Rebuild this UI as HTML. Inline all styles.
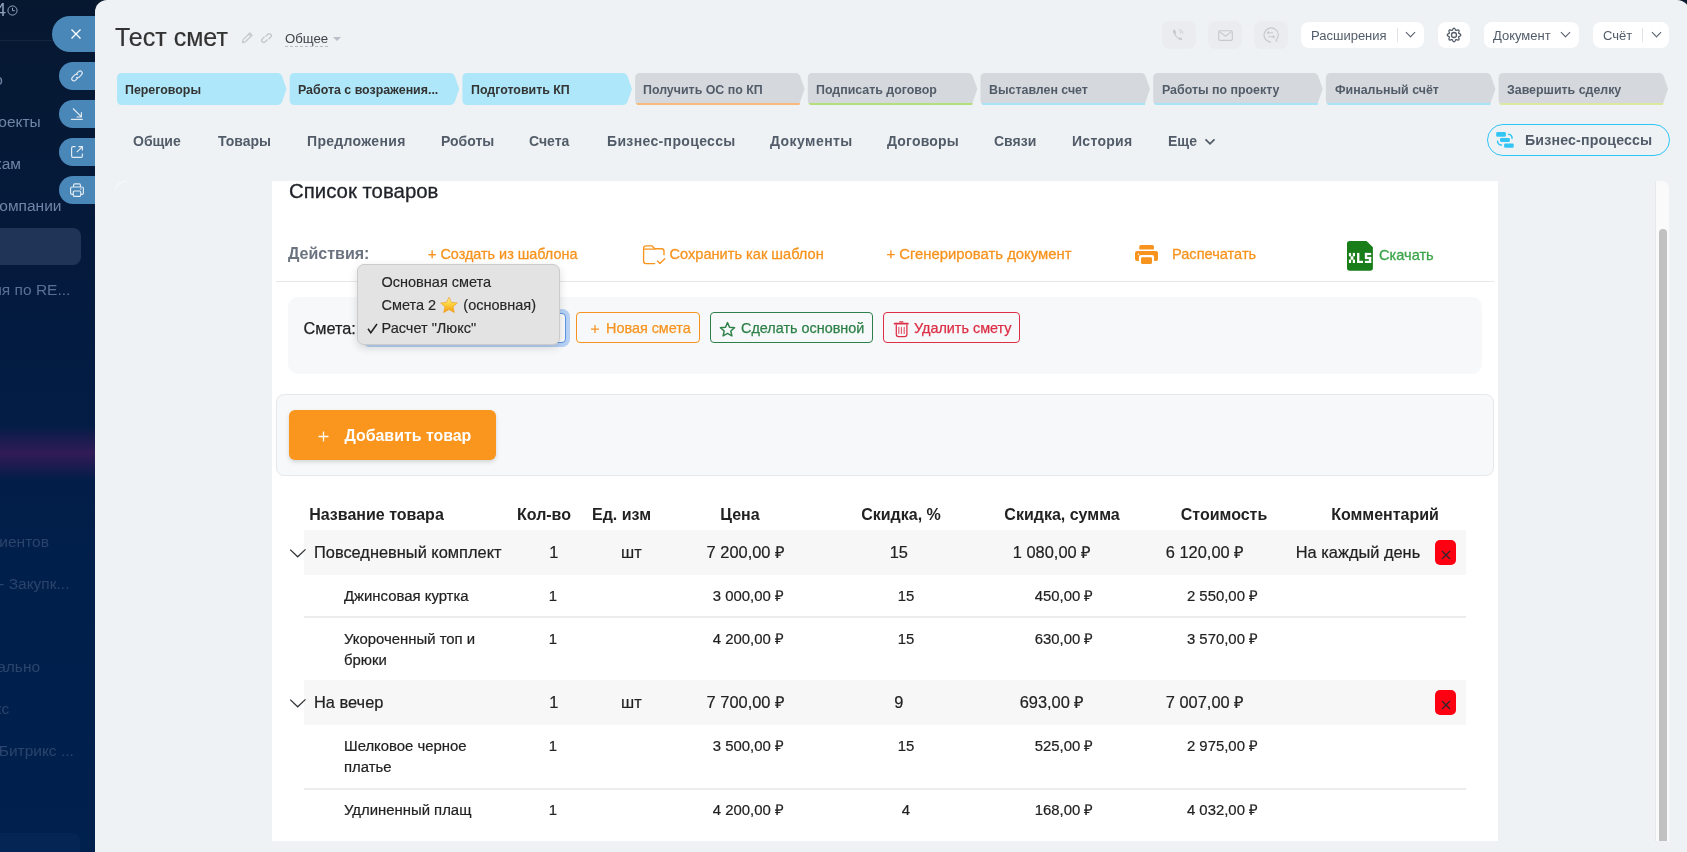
<!DOCTYPE html>
<html><head><meta charset="utf-8">
<style>
*{box-sizing:border-box;margin:0;padding:0}
html,body{width:1687px;height:852px;overflow:hidden}
#wrap{position:absolute;left:0;top:0;width:1687px;height:852px;will-change:transform}
body{font-family:"Liberation Sans",sans-serif;background:#0b1a2e;position:relative}
.abs{position:absolute}
.nw{white-space:nowrap}
/* sidebar */
#sb{position:absolute;left:0;top:0;width:95px;height:852px;background:linear-gradient(180deg,#061830 0%,#05193a 25%,#031c43 45%,#011f4b 65%,#00204d 100%);overflow:hidden}
.sbt{position:absolute;font-size:15.5px;color:#6f86a8;white-space:nowrap;line-height:18px}
.sbd{color:#2b446d}
#glow{position:absolute;left:0;top:425px;width:95px;height:55px;background:linear-gradient(180deg,rgba(60,25,90,0) 0%,rgba(52,26,88,.55) 30%,rgba(58,27,90,.85) 52%,rgba(52,26,88,.55) 72%,rgba(60,25,90,0) 100%)}
/* side buttons */
.sbtn{position:absolute;left:59px;width:40px;height:28px;border-radius:14px 0 0 14px;background:#4a87b9}
/* slider */
#sl{position:absolute;left:95px;top:0;width:1595px;height:852px;background:#eef2f4;border-top-left-radius:12px;border-top-right-radius:13px}

.tb{position:absolute;top:22px;height:26px;background:#fff;border-radius:8px;font-size:13px;color:#525c69;line-height:28px;white-space:nowrap}
.tbi{position:absolute;top:21px;width:34px;height:28px;background:#e8eaed;border-radius:8px;opacity:.75}
.chev{position:absolute;width:7px;height:7px;border-right:1.3px solid #525c69;border-bottom:1.3px solid #525c69;transform:rotate(45deg)}
.sep{position:absolute;top:6px;width:1px;height:14px;background:#dfe2e6}
.st{position:absolute;top:74px;height:32px;font-size:12.4px;font-weight:700;line-height:32px;white-space:nowrap}
.tab{position:absolute;top:132px;font-size:14px;font-weight:700;color:#525c69;line-height:18px;white-space:nowrap}

.al{position:absolute;top:245px;font-size:14.4px;-webkit-text-stroke:.3px currentColor;color:#f7931e;line-height:18px;white-space:nowrap}
.btn{position:absolute;top:312px;height:31px;border:1px solid;border-radius:4px;background:transparent;font-size:14.4px;line-height:31px;-webkit-text-stroke:.25px currentColor;white-space:nowrap}
.th{position:absolute;top:505px;font-size:16px;font-weight:700;color:#222;line-height:19px;white-space:nowrap;transform:translateX(-50%)}
.c{position:absolute;white-space:nowrap;transform:translateX(-50%);color:#222}
.g{font-size:16.4px;line-height:20px;-webkit-text-stroke:.2px currentColor}
.sub{font-size:14.9px;line-height:20.6px;margin-top:1px;-webkit-text-stroke:.2px currentColor}
.xb{position:absolute;left:1435px;width:21px;height:25px;background:#fe0012;border-radius:5px}
.dm{font-size:14.5px;color:#262626;line-height:17px;-webkit-text-stroke:.15px currentColor}
</style></head>
<body><div id="wrap">
<div id="sb">
  <div class="sbt" style="left:-4px;top:0px;font-size:18px;color:#8fa2bd;line-height:20px">4</div>
  <svg class="abs" style="left:7px;top:5px" width="11" height="11" viewBox="0 0 11 11"><circle cx="5.5" cy="5.5" r="4.6" fill="none" stroke="#8fa2bd" stroke-width="1"/><path d="M5.5 2.8 V5.7 H7.8" fill="none" stroke="#8fa2bd" stroke-width="1"/></svg>
  <div class="abs" style="left:0;top:40px;width:95px;height:1px;background:#13253f"></div>
  <div class="sbt" style="left:-5.8px;top:71px">о</div>
  <div class="sbt" style="left:-1.7px;top:113px">оекты</div>
  <div class="sbt" style="left:-5.4px;top:155px">кам</div>
  <div class="sbt" style="left:-0.7px;top:197px">омпании</div>
  <div class="abs" style="left:-10px;top:228px;width:91px;height:37px;border-radius:8px;background:#1f3456"></div>
  <div class="sbt" style="left:-6.8px;top:281px;color:#5a7094">ия по RE...</div>
  <div id="glow"></div>
  <div class="sbt sbd" style="left:-0.7px;top:533px">иентов</div>
  <div class="sbt sbd" style="left:-0.8px;top:575px">- Закупк...</div>
  <div class="sbt sbd" style="left:-2.8px;top:658px">ально</div>
  <div class="sbt sbd" style="left:-5.4px;top:700px">кс</div>
  <div class="sbt sbd" style="left:-1.3px;top:742px">Битрикс ...</div>
  <div class="abs" style="left:-10px;top:833px;width:90px;height:40px;border-radius:8px;background:rgba(40,80,140,.12)"></div>
</div>
<div class="abs" style="left:52px;top:16px;width:50px;height:36px;border-radius:18px 0 0 18px;background:#4a87b9"></div>
<div class="sbtn" style="top:62px"></div>
<div class="sbtn" style="top:100px"></div>
<div class="sbtn" style="top:138px"></div>
<div class="sbtn" style="top:176px"></div>
<svg class="abs" style="left:70px;top:28px" width="12" height="12" viewBox="0 0 12 12"><path d="M1.5 1.5 L10.5 10.5 M10.5 1.5 L1.5 10.5" stroke="#fff" stroke-width="1.3"/></svg>
<svg class="abs" style="left:69px;top:68px" width="16" height="16" viewBox="0 0 16 16"><g fill="none" stroke="#e3ebf2" stroke-width="1.15"><path d="M7.2 6.1 L9.6 3.7 a2.1 2.1 0 0 1 3 3 L10.2 9.1 a2.1 2.1 0 0 1 -3 0"/><path d="M8.8 9.9 L6.4 12.3 a2.1 2.1 0 0 1 -3 -3 L5.8 6.9 a2.1 2.1 0 0 1 3 0"/></g></svg>
<svg class="abs" style="left:69px;top:106px" width="16" height="16" viewBox="0 0 16 16"><g fill="none" stroke="#e3ebf2" stroke-width="1.15"><path d="M4 2.5 L12.2 10.7 M12.4 6.2 V11 H7.6"/><path d="M1.9 13.4 H13.8"/></g></svg>
<svg class="abs" style="left:69px;top:144px" width="16" height="16" viewBox="0 0 16 16"><g fill="none" stroke="#e3ebf2" stroke-width="1.15"><path d="M6.5 2.6 H4 Q2.6 2.6 2.6 4 V12 Q2.6 13.4 4 13.4 H12 Q13.4 13.4 13.4 12 V9.5"/><path d="M7.8 8.2 L13.2 2.8 M9.4 2.6 H13.4 V6.6"/></g></svg>
<svg class="abs" style="left:69px;top:182px" width="16" height="16" viewBox="0 0 16 16"><g fill="none" stroke="#e3ebf2" stroke-width="1.15"><path d="M4.6 5 V3 Q4.6 1.9 5.7 1.9 H10.3 Q11.4 1.9 11.4 3 V5"/><path d="M4.3 12.3 H3 Q1.6 12.3 1.6 10.9 V6.5 Q1.6 5 3 5 H13 Q14.4 5 14.4 6.5 V10.9 Q14.4 12.3 13 12.3 H11.7"/><rect x="4.3" y="9" width="7.4" height="5.3" rx="1"/><path d="M11 7 H12.5"/></g></svg>
<div id="sl"></div>
<!-- HEADER -->
<div class="abs nw" style="left:115px;top:22px;font-size:25px;color:#333;line-height:30px;-webkit-text-stroke:.2px currentColor">Тест смет</div>
<!-- pencil -->
<svg class="abs" style="left:240px;top:31px" width="14" height="14" viewBox="0 0 14 14"><path d="M2.5 11.5 L3.2 8.6 L9.8 2 L12 4.2 L5.4 10.8 Z M8.6 3.2 L10.8 5.4" fill="none" stroke="#c5c9ce" stroke-width="1.3" stroke-linejoin="round"/></svg>
<!-- link -->
<svg class="abs" style="left:259px;top:31px" width="15" height="14" viewBox="0 0 15 14"><g fill="none" stroke="#c5c9ce" stroke-width="1.4"><path d="M6.5 5.5 L8.8 3.2 a2 2 0 0 1 2.9 2.9 L9.5 8.3"/><path d="M8.5 8.5 L6.2 10.8 a2 2 0 0 1 -2.9 -2.9 L5.5 5.7"/></g></svg>
<div class="abs nw" style="left:285px;top:31px;font-size:13.2px;color:#3f444b;line-height:15px;border-bottom:1px dashed #b9bfc7;padding-bottom:0">Общее</div>
<div class="abs" style="left:333px;top:37px;width:0;height:0;border-left:4px solid transparent;border-right:4px solid transparent;border-top:4px solid #b9bfc7"></div>


<!-- top right -->
<div class="tbi" style="left:1162px"></div>
<div class="tbi" style="left:1208px"></div>
<div class="tbi" style="left:1254px"></div>
<svg class="abs" style="left:1170px;top:27px" width="16" height="16" viewBox="0 0 16 16"><path d="M4.2 2.2 C3.2 2.6 2.7 3.6 3.1 5 C4 8 6.4 11 9.4 12.8 C10.6 13.4 11.6 13.2 12.3 12.4 L11.4 10.7 L9.8 10.4 L8.9 11.1 C7.4 10.2 6 8.5 5.3 6.9 L6.1 6 L5.8 4.3 Z" fill="#c6c9ce"/><path d="M9.3 2.6 a4.2 4.2 0 0 1 3.6 3.6 M9.1 4.5 a2.3 2.3 0 0 1 1.9 1.9" fill="none" stroke="#c6c9ce" stroke-width=".9"/></svg>
<svg class="abs" style="left:1217.5px;top:29.5px" width="15" height="11" viewBox="0 0 15 11"><rect x=".7" y=".7" width="13.6" height="9.6" rx="1.4" fill="none" stroke="#c6c9ce" stroke-width="1.15"/><path d="M1.2 1.4 L7.5 6.2 L13.8 1.4" fill="none" stroke="#c6c9ce" stroke-width="1.15"/></svg>
<svg class="abs" style="left:1262px;top:26px" width="18" height="18" viewBox="0 0 18 18"><path d="M15.3 15.6 L14 14.2 A7.1 7.1 0 1 0 9 16.1" fill="none" stroke="#c6c9ce" stroke-width="1.1"/><path d="M5.4 6.7 H11 M6.8 5.3 L5.4 6.7 L6.8 8 M12.3 10.7 H6.5 M10.9 9.3 L12.3 10.7 L10.9 12" fill="none" stroke="#c6c9ce" stroke-width="1.05"/></svg>

<div class="tb" style="left:1301px;width:123px"><span class="abs" style="left:10px">Расширения</span><div class="sep" style="left:96px"></div><div class="chev" style="left:106px;top:7px"></div></div>
<div class="tb" style="left:1438px;width:32px"></div>
<svg class="abs" style="left:1446px;top:27px" width="16" height="16" viewBox="0 0 16 16"><path d="M14.75 8.00 L14.70 8.26 L14.57 8.52 L14.36 8.75 L14.09 8.96 L13.79 9.15 L13.48 9.32 L13.20 9.47 L12.96 9.61 L12.78 9.76 L12.67 9.93 L12.62 10.13 L12.64 10.37 L12.71 10.64 L12.81 10.95 L12.91 11.28 L12.99 11.62 L13.03 11.96 L13.01 12.28 L12.93 12.55 L12.77 12.77 L12.55 12.93 L12.28 13.01 L11.96 13.03 L11.62 12.99 L11.28 12.91 L10.95 12.81 L10.64 12.71 L10.37 12.64 L10.13 12.62 L9.93 12.67 L9.76 12.78 L9.61 12.96 L9.47 13.20 L9.32 13.48 L9.15 13.79 L8.96 14.09 L8.75 14.36 L8.52 14.57 L8.26 14.70 L8.00 14.75 L7.74 14.70 L7.48 14.57 L7.25 14.36 L7.04 14.09 L6.85 13.79 L6.68 13.48 L6.53 13.20 L6.39 12.96 L6.24 12.78 L6.07 12.67 L5.87 12.62 L5.63 12.64 L5.36 12.71 L5.05 12.81 L4.72 12.91 L4.38 12.99 L4.04 13.03 L3.72 13.01 L3.45 12.93 L3.23 12.77 L3.07 12.55 L2.99 12.28 L2.97 11.96 L3.01 11.62 L3.09 11.28 L3.19 10.95 L3.29 10.64 L3.36 10.37 L3.38 10.13 L3.33 9.93 L3.22 9.76 L3.04 9.61 L2.80 9.47 L2.52 9.32 L2.21 9.15 L1.91 8.96 L1.64 8.75 L1.43 8.52 L1.30 8.26 L1.25 8.00 L1.30 7.74 L1.43 7.48 L1.64 7.25 L1.91 7.04 L2.21 6.85 L2.52 6.68 L2.80 6.53 L3.04 6.39 L3.22 6.24 L3.33 6.07 L3.38 5.87 L3.36 5.63 L3.29 5.36 L3.19 5.05 L3.09 4.72 L3.01 4.38 L2.97 4.04 L2.99 3.72 L3.07 3.45 L3.23 3.23 L3.45 3.07 L3.72 2.99 L4.04 2.97 L4.38 3.01 L4.72 3.09 L5.05 3.19 L5.36 3.29 L5.63 3.36 L5.87 3.38 L6.07 3.33 L6.24 3.22 L6.39 3.04 L6.53 2.80 L6.68 2.52 L6.85 2.21 L7.04 1.91 L7.25 1.64 L7.48 1.43 L7.74 1.30 L8.00 1.25 L8.26 1.30 L8.52 1.43 L8.75 1.64 L8.96 1.91 L9.15 2.21 L9.32 2.52 L9.47 2.80 L9.61 3.04 L9.76 3.22 L9.93 3.33 L10.13 3.38 L10.37 3.36 L10.64 3.29 L10.95 3.19 L11.28 3.09 L11.62 3.01 L11.96 2.97 L12.28 2.99 L12.55 3.07 L12.77 3.23 L12.93 3.45 L13.01 3.72 L13.03 4.04 L12.99 4.38 L12.91 4.72 L12.81 5.05 L12.71 5.36 L12.64 5.63 L12.62 5.87 L12.67 6.07 L12.78 6.24 L12.96 6.39 L13.20 6.53 L13.48 6.68 L13.79 6.85 L14.09 7.04 L14.36 7.25 L14.57 7.48 L14.70 7.74 L14.75 8.00 Z" fill="none" stroke="#525c69" stroke-width="1.3" stroke-linejoin="round"/><circle cx="8" cy="8" r="2.5" fill="none" stroke="#525c69" stroke-width="1.3"/></svg>
<div class="tb" style="left:1484px;width:95px"><span class="abs" style="left:9px">Документ</span><div class="chev" style="left:78px;top:7px"></div></div>
<div class="tb" style="left:1593px;width:76px"><span class="abs" style="left:10px">Счёт</span><div class="sep" style="left:49px"></div><div class="chev" style="left:60px;top:7px"></div></div>

<!-- stages -->
<svg class="abs" style="left:117px;top:73px" width="1560" height="32" viewBox="0 0 1560 32">
<path d="M5.0 0 H160.5 Q163.5 0 165.0 3 L169.5 16 L165.0 29 Q163.5 32 160.5 32 H5.0 Q0.0 32 0.0 27 V5 Q0.0 0 5.0 0 Z" fill="#ade7f9"/>
<path d="M177.7 0 H333.2 Q336.2 0 337.7 3 L342.2 16 L337.7 29 Q336.2 32 333.2 32 H177.7 Q172.7 32 172.7 27 V5 Q172.7 0 177.7 0 Z" fill="#ade7f9"/>
<path d="M350.4 0 H505.9 Q508.9 0 510.4 3 L514.9 16 L510.4 29 Q508.9 32 505.9 32 H350.4 Q345.4 32 345.4 27 V5 Q345.4 0 350.4 0 Z" fill="#ade7f9"/>
<path d="M523.1 0 H678.6 Q681.6 0 683.1 3 L687.6 16 L683.1 29 Q681.6 32 678.6 32 H523.1 Q518.1 32 518.1 27 V5 Q518.1 0 523.1 0 Z" fill="#d5d8dc"/>
<path d="M519.1 30 H683.1 L682.4 32 H522.1 Q519.1 32 519.1 30 Z" fill="#f9b97a"/>
<path d="M695.8 0 H851.3 Q854.3 0 855.8 3 L860.3 16 L855.8 29 Q854.3 32 851.3 32 H695.8 Q690.8 32 690.8 27 V5 Q690.8 0 695.8 0 Z" fill="#d5d8dc"/>
<path d="M691.8 30 H855.8 L855.1 32 H694.8 Q691.8 32 691.8 30 Z" fill="#b5df7a"/>
<path d="M868.5 0 H1024.0 Q1027.0 0 1028.5 3 L1033.0 16 L1028.5 29 Q1027.0 32 1024.0 32 H868.5 Q863.5 32 863.5 27 V5 Q863.5 0 868.5 0 Z" fill="#d5d8dc"/>
<path d="M864.5 30 H1028.5 L1027.8 32 H867.5 Q864.5 32 864.5 30 Z" fill="#a9e4f7"/>
<path d="M1041.2 0 H1196.7 Q1199.7 0 1201.2 3 L1205.7 16 L1201.2 29 Q1199.7 32 1196.7 32 H1041.2 Q1036.2 32 1036.2 27 V5 Q1036.2 0 1041.2 0 Z" fill="#d5d8dc"/>
<path d="M1037.2 30 H1201.2 L1200.5 32 H1040.2 Q1037.2 32 1037.2 30 Z" fill="#a9e4f7"/>
<path d="M1213.9 0 H1369.4 Q1372.4 0 1373.9 3 L1378.4 16 L1373.9 29 Q1372.4 32 1369.4 32 H1213.9 Q1208.9 32 1208.9 27 V5 Q1208.9 0 1213.9 0 Z" fill="#d5d8dc"/>
<path d="M1209.9 30 H1373.9 L1373.2 32 H1212.9 Q1209.9 32 1209.9 30 Z" fill="#a9e4f7"/>
<path d="M1386.6 0 H1542.1 Q1545.1 0 1546.6 3 L1551.1 16 L1546.6 29 Q1545.1 32 1542.1 32 H1386.6 Q1381.6 32 1381.6 27 V5 Q1381.6 0 1386.6 0 Z" fill="#d5d8dc"/>
<path d="M1382.6 30 H1546.6 L1545.9 32 H1385.6 Q1382.6 32 1382.6 30 Z" fill="#dce8a0"/>
</svg>
<div class="st" style="left:125px;color:#333">Переговоры</div>
<div class="st" style="left:298px;color:#333">Работа с возражения...</div>
<div class="st" style="left:471px;color:#333">Подготовить КП</div>
<div class="st" style="left:643px;color:#525c69">Получить ОС по КП</div>
<div class="st" style="left:816px;color:#525c69">Подписать договор</div>
<div class="st" style="left:989px;color:#525c69">Выставлен счет</div>
<div class="st" style="left:1162px;color:#525c69">Работы по проекту</div>
<div class="st" style="left:1335px;color:#525c69">Финальный счёт</div>
<div class="st" style="left:1507px;color:#525c69">Завершить сделку</div>

<!-- tabs -->
<div class="tab" style="left:133px">Общие</div>
<div class="tab" style="left:218px">Товары</div>
<div class="tab" style="left:307px;letter-spacing:.32px">Предложения</div>
<div class="tab" style="left:441px">Роботы</div>
<div class="tab" style="left:529px">Счета</div>
<div class="tab" style="left:607px;letter-spacing:.35px">Бизнес-процессы</div>
<div class="tab" style="left:770px;letter-spacing:.45px">Документы</div>
<div class="tab" style="left:887px;letter-spacing:.2px">Договоры</div>
<div class="tab" style="left:994px">Связи</div>
<div class="tab" style="left:1072px;letter-spacing:.3px">История</div>
<div class="tab" style="left:1168px">Еще</div>
<svg class="abs" style="left:1204px;top:137px" width="12" height="9" viewBox="0 0 12 9"><path d="M1.5 2.3 L6 6.8 L10.5 2.3" fill="none" stroke="#525c69" stroke-width="1.75"/></svg>
<div class="abs" style="left:1487px;top:124px;width:183px;height:32px;border:1.2px solid #2fc6f6;border-radius:16px"></div>
<svg class="abs" style="left:1492px;top:128px" width="26" height="24" viewBox="0 0 26 24"><g fill="#33c5f4"><rect x="4.2" y="4.1" width="9.7" height="4.6" rx="1.3"/><rect x="8" y="10" width="9.9" height="3.9" rx="1.1"/><rect x="12.1" y="15.4" width="9.6" height="4.3" rx="1.2"/></g><g fill="none" stroke="#33c5f4" stroke-width="1.5" stroke-linecap="round"><path d="M16.6 6.3 A3.6 3.6 0 0 1 20 10.3"/><path d="M5.6 13.2 A3.8 3.8 0 0 0 9.4 17"/></g></svg>
<div class="tab" style="left:1525px;top:131px;font-size:14.2px;letter-spacing:.15px">Бизнес-процессы</div>

<!-- CONTENT PANEL -->
<div class="abs" style="left:115px;top:181px;width:12px;height:10px;border-top-left-radius:12px;border-top:1px solid rgba(255,255,255,.55);border-left:1px solid rgba(255,255,255,.55)"></div>
<div class="abs" style="left:272px;top:181px;width:1226px;height:660px;background:#fff"></div>
<div class="abs nw" style="left:289px;top:179px;font-size:20.4px;color:#1f2329;line-height:24px;-webkit-text-stroke:.3px currentColor">Список товаров</div>
<div class="abs nw" style="left:288px;top:244px;font-size:16px;font-weight:700;color:#6a737f;line-height:20px">Действия:</div>
<div class="al" style="left:428px">+ Создать из шаблона</div>
<svg class="abs" style="left:642px;top:245px" width="24" height="20" viewBox="0 0 24 20"><g fill="none" stroke="#f8931d" stroke-width="1.35" stroke-linecap="round" stroke-linejoin="round"><path d="M12.6 18.6 H4.2 Q1.6 18.6 1.6 16 V3.4 Q1.6 0.8 4.2 0.8 H9.8 L12.8 3.7 H19.6 Q22 3.7 22 6.1 V9.8"/><path d="M1.8 4.1 H12.8"/><path d="M15.4 16.1 L17.9 18.4 L22.8 13.7"/></g></svg>
<div class="al" style="left:669.5px;font-size:14.6px">Сохранить как шаблон</div>
<div class="al" style="left:886.5px;font-size:14.85px">+ Сгенерировать документ</div>
<svg class="abs" style="left:1135px;top:245px" width="24" height="19" viewBox="0 0 24 19"><g fill="#f8931d"><path d="M5.8 0 H17.4 Q18.9 0 18.9 1.5 V4.6 H4.3 V1.5 Q4.3 0 5.8 0 Z"/><path d="M2 5.9 H21 Q23 5.9 23 7.9 V14 Q23 15.9 21 15.9 H19.1 V12.2 Q19.1 10 17 10 H6 Q3.9 10 3.9 12.2 V15.9 H2 Q0 15.9 0 14 V7.9 Q0 5.9 2 5.9 Z"/><rect x="6" y="12.2" width="11" height="6.7" rx="1.3"/></g><circle cx="3.5" cy="9.3" r=".7" fill="#fff"/></svg>
<div class="al" style="left:1172px;font-size:14.6px">Распечатать</div>
<svg class="abs" style="left:1347px;top:240px" width="26" height="31" viewBox="0 0 26 31"><path d="M2.6 0.9 H19.5 L25.9 7.3 V28 Q25.9 30.7 23.2 30.7 H2.7 Q0 30.7 0 28 V3.5 Q0 0.9 2.6 0.9 Z" fill="#197d19"/><g fill="#fff"><rect x="1.9" y="12.9" width="2.2" height="3.4"/><rect x="5.8" y="12.9" width="2.2" height="3.4"/><rect x="3.6" y="16.3" width="2.8" height="3.4"/><rect x="1.9" y="19.6" width="2.2" height="3.4"/><rect x="5.8" y="19.6" width="2.2" height="3.4"/><rect x="10.1" y="12.9" width="2.3" height="10.1"/><rect x="10.1" y="20.8" width="5.9" height="2.2"/><rect x="17.9" y="12.9" width="6.3" height="2.2"/><rect x="17.9" y="12.9" width="2.3" height="5.2"/><rect x="17.9" y="16.9" width="6.3" height="2.2"/><rect x="21.9" y="16.9" width="2.3" height="6.1"/><rect x="17.9" y="20.8" width="6.3" height="2.2"/></g></svg>
<div class="al" style="left:1379px;top:246px;color:#3ba54a;font-size:14.6px">Скачать</div>
<div class="abs" style="left:276px;top:281px;width:1218px;height:1px;background:#e5e8eb"></div>

<!-- smeta box -->
<div class="abs" style="left:288px;top:297px;width:1194px;height:77px;background:#f7f8fa;border-radius:10px"></div>
<div class="abs nw" style="left:303.5px;top:318.5px;font-size:16.3px;color:#222;line-height:19px;-webkit-text-stroke:.25px currentColor">Смета:</div>
<div class="abs" style="left:362px;top:308.5px;width:208px;height:38px;border-radius:8px;background:rgba(120,170,240,.5)"></div>
<div class="abs" style="left:364px;top:312.5px;width:202px;height:30px;border-radius:4px;background:#fafafa;border:1px solid #5b95e8"></div>
<div class="btn" style="left:576px;width:124px;border-color:#f7931e;color:#f7931e"><svg class="abs" style="left:12.5px;top:11px" width="10" height="10" viewBox="0 0 10 10"><path d="M5 1 V9 M1 5 H9" stroke="#f7931e" stroke-width="1.25"/></svg><span class="abs" style="left:29px">Новая смета</span></div>
<div class="btn" style="left:710px;width:163px;border-color:#2e8049;color:#2e8049"><svg class="abs" style="left:8px;top:8px" width="17" height="17" viewBox="0 0 17 17"><path d="M8.5 1.6 L10.5 6.2 L15.6 6.7 L11.8 10 L12.9 15 L8.5 12.4 L4.1 15 L5.2 10 L1.4 6.7 L6.5 6.2 Z" fill="none" stroke="#2e8049" stroke-width="1.45" stroke-linejoin="round"/></svg><span class="abs" style="left:30px">Сделать основной</span></div>
<div class="btn" style="left:883px;width:137px;border-color:#dc2f45;color:#dc2f45"><svg class="abs" style="left:7px;top:5px" width="22" height="22" viewBox="0 0 22 22"><g fill="none" stroke="#dc2f45" stroke-linecap="round"><path d="M3.6 5.7 H16.9" stroke-width="1.7"/><path d="M8.8 3.9 H11.8" stroke-width="1.3"/><path d="M5.3 6.8 V16.3 Q5.3 18.6 7.6 18.6 H13.6 Q15.9 18.6 15.9 16.3 V6.8" stroke-width="1.25"/><path d="M7.8 9.2 V15.5 M10.4 9.2 V15.5 M13.2 9.2 V15.5" stroke-width="1.1" stroke-opacity=".8"/></g></svg><span class="abs" style="left:30px">Удалить смету</span></div>

<!-- dropdown menu -->
<div class="abs" style="left:357px;top:264px;width:203px;height:81px;background:#e3e3e3;border:1px solid #cbcbcb;border-radius:7px;box-shadow:0 3px 9px rgba(0,0,0,.14)"></div>
<div class="abs nw dm" style="left:381.5px;top:273.8px">Основная смета</div>
<div class="abs nw dm" style="left:381.5px;top:296.5px">Смета 2</div>
<svg class="abs" style="left:439px;top:296px" width="20" height="18" viewBox="0 0 20 18"><defs><linearGradient id="sg" x1="0" y1="0" x2="0" y2="1"><stop offset="0" stop-color="#fff3a0"/><stop offset=".45" stop-color="#ffd23c"/><stop offset="1" stop-color="#f59a14"/></linearGradient></defs><path d="M10 1.2 L12.5 6.4 L18.3 7 L14 10.8 L15.3 16.5 L10 13.6 L4.7 16.5 L6 10.8 L1.7 7 L7.5 6.4 Z" fill="url(#sg)" stroke="#f0a020" stroke-width=".7" stroke-linejoin="round"/></svg>
<div class="abs nw dm" style="left:463.3px;top:296.5px">(основная)</div>
<svg class="abs" style="left:367px;top:322.5px" width="11" height="11" viewBox="0 0 11 11"><path d="M1 5.8 L3.8 9.8 L10 1" fill="none" stroke="#222" stroke-width="1.5" stroke-linejoin="miter"/></svg>
<div class="abs nw dm" style="left:381.5px;top:319.5px">Расчет "Люкс"</div>
<!-- add product box -->
<div class="abs" style="left:276px;top:394px;width:1218px;height:82px;background:#f7f8fa;border:1px solid #e6e8eb;border-radius:8px"></div>
<div class="abs" style="left:289px;top:410px;width:207px;height:50px;background:#fa951e;border-radius:6px;box-shadow:0 2px 4px rgba(0,0,0,.15)"></div>
<svg class="abs" style="left:318px;top:431px" width="11" height="11" viewBox="0 0 11 11"><path d="M5.5 0.5 V10.5 M0.5 5.5 H10.5" stroke="#fff" stroke-width="1.3"/></svg>
<div class="abs nw" style="left:344.5px;top:425.6px;font-size:15.9px;font-weight:700;color:#fff;line-height:20px">Добавить товар</div>

<!-- table header -->
<div class="th" style="left:376.5px">Название товара</div>
<div class="th" style="left:544px">Кол-во</div>
<div class="th" style="left:621.5px">Ед. изм</div>
<div class="th" style="left:740px">Цена</div>
<div class="th" style="left:901px">Скидка, %</div>
<div class="th" style="left:1062px">Скидка, сумма</div>
<div class="th" style="left:1224px">Стоимость</div>
<div class="th" style="left:1385px">Комментарий</div>

<!-- group 1 -->
<div class="abs" style="left:304px;top:530px;width:1162px;height:45px;background:#f7f7f7"></div>
<svg class="abs" style="left:289px;top:547px" width="17" height="12" viewBox="0 0 17 12"><path d="M1.2 2.6 L8.7 9.8 L16.5 2.4" fill="none" stroke="#33373c" stroke-width="1.3"/></svg>
<div class="abs nw g" style="left:314px;top:542px;color:#222">Повседневный комплект</div>
<div class="c g" style="left:553.7px;top:542px">1</div>
<div class="c g" style="left:631.4px;top:542px">шт</div>
<div class="c g" style="left:745.8px;top:542px">7 200,00 ₽</div>
<div class="c g" style="left:898.8px;top:542px">15</div>
<div class="c g" style="left:1052px;top:542px">1 080,00 ₽</div>
<div class="c g" style="left:1205px;top:542px">6 120,00 ₽</div>
<div class="c g" style="left:1358px;top:542px">На каждый день</div>
<div class="xb" style="top:540px"><svg class="abs" style="left:6px;top:10px" width="10" height="10" viewBox="0 0 10 10"><path d="M1 1 L9 9 M9 1 L1 9" stroke="#262a2e" stroke-width="1.2"/></svg></div>

<!-- sub rows 1 -->
<div class="abs nw sub" style="left:344px;top:585px;color:#222">Джинсовая куртка</div>
<div class="c sub" style="left:553px;top:585px">1</div>
<div class="c sub" style="left:748.3px;top:585px">3 000,00 ₽</div>
<div class="c sub" style="left:906px;top:585px">15</div>
<div class="c sub" style="left:1064px;top:585px">450,00 ₽</div>
<div class="c sub" style="left:1222.5px;top:585px">2 550,00 ₽</div>
<div class="abs" style="left:304px;top:616px;width:1162px;height:2px;background:#ececec"></div>

<div class="abs sub" style="left:344px;top:628px;color:#222">Укороченный топ и<br>брюки</div>
<div class="c sub" style="left:553px;top:628px">1</div>
<div class="c sub" style="left:748.3px;top:628px">4 200,00 ₽</div>
<div class="c sub" style="left:906px;top:628px">15</div>
<div class="c sub" style="left:1064px;top:628px">630,00 ₽</div>
<div class="c sub" style="left:1222.5px;top:628px">3 570,00 ₽</div>

<!-- group 2 -->
<div class="abs" style="left:304px;top:680px;width:1162px;height:44.5px;background:#f7f7f7"></div>
<svg class="abs" style="left:289px;top:697px" width="17" height="12" viewBox="0 0 17 12"><path d="M1.2 2.6 L8.7 9.8 L16.5 2.4" fill="none" stroke="#33373c" stroke-width="1.3"/></svg>
<div class="abs nw g" style="left:314px;top:692px;color:#222">На вечер</div>
<div class="c g" style="left:553.7px;top:692px">1</div>
<div class="c g" style="left:631.4px;top:692px">шт</div>
<div class="c g" style="left:745.8px;top:692px">7 700,00 ₽</div>
<div class="c g" style="left:898.8px;top:692px">9</div>
<div class="c g" style="left:1052px;top:692px">693,00 ₽</div>
<div class="c g" style="left:1205px;top:692px">7 007,00 ₽</div>
<div class="xb" style="top:690px"><svg class="abs" style="left:6px;top:10px" width="10" height="10" viewBox="0 0 10 10"><path d="M1 1 L9 9 M9 1 L1 9" stroke="#262a2e" stroke-width="1.2"/></svg></div>

<div class="abs sub" style="left:344px;top:735px;color:#222">Шелковое черное<br>платье</div>
<div class="c sub" style="left:553px;top:735px">1</div>
<div class="c sub" style="left:748.3px;top:735px">3 500,00 ₽</div>
<div class="c sub" style="left:906px;top:735px">15</div>
<div class="c sub" style="left:1064px;top:735px">525,00 ₽</div>
<div class="c sub" style="left:1222.5px;top:735px">2 975,00 ₽</div>
<div class="abs" style="left:304px;top:787.5px;width:1162px;height:2px;background:#ececec"></div>

<div class="abs nw sub" style="left:344px;top:799px;color:#222">Удлиненный плащ</div>
<div class="c sub" style="left:553px;top:799px">1</div>
<div class="c sub" style="left:748.3px;top:799px">4 200,00 ₽</div>
<div class="c sub" style="left:906px;top:799px">4</div>
<div class="c sub" style="left:1064px;top:799px">168,00 ₽</div>
<div class="c sub" style="left:1222.5px;top:799px">4 032,00 ₽</div>

<!-- scrollbar -->
<div class="abs" style="left:1655px;top:181px;width:14px;height:660px;background:#fafafa;border-left:1px solid #e8e8e8;border-top-right-radius:7px"></div>
<div class="abs" style="left:1659px;top:229px;width:8px;height:612px;background:#c1c1c1;border-radius:4px 4px 0 0"></div>
</div></body></html>
